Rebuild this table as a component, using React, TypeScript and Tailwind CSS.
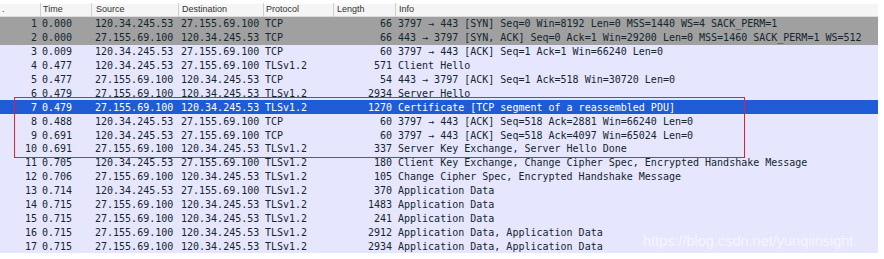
const rows: [string, string, string, string, string, string, string][] = [
  ['1', '0.000', '120.34.245.53', '27.155.69.100', 'TCP', '66', '3797 → 443 [SYN] Seq=0 Win=8192 Len=0 MSS=1440 WS=4 SACK_PERM=1'],
  ['2', '0.000', '27.155.69.100', '120.34.245.53', 'TCP', '66', '443 → 3797 [SYN, ACK] Seq=0 Ack=1 Win=29200 Len=0 MSS=1460 SACK_PERM=1 WS=512'],
  ['3', '0.009', '120.34.245.53', '27.155.69.100', 'TCP', '60', '3797 → 443 [ACK] Seq=1 Ack=1 Win=66240 Len=0'],
  ['4', '0.477', '120.34.245.53', '27.155.69.100', 'TLSv1.2', '571', 'Client Hello'],
  ['5', '0.477', '27.155.69.100', '120.34.245.53', 'TCP', '54', '443 → 3797 [ACK] Seq=1 Ack=518 Win=30720 Len=0'],
  ['6', '0.479', '27.155.69.100', '120.34.245.53', 'TLSv1.2', '2934', 'Server Hello'],
  ['7', '0.479', '27.155.69.100', '120.34.245.53', 'TLSv1.2', '1270', 'Certificate [TCP segment of a reassembled PDU]'],
  ['8', '0.488', '120.34.245.53', '27.155.69.100', 'TCP', '60', '3797 → 443 [ACK] Seq=518 Ack=2881 Win=66240 Len=0'],
  ['9', '0.691', '120.34.245.53', '27.155.69.100', 'TCP', '60', '3797 → 443 [ACK] Seq=518 Ack=4097 Win=65024 Len=0'],
  ['10', '0.691', '27.155.69.100', '120.34.245.53', 'TLSv1.2', '337', 'Server Key Exchange, Server Hello Done'],
  ['11', '0.705', '120.34.245.53', '27.155.69.100', 'TLSv1.2', '180', 'Client Key Exchange, Change Cipher Spec, Encrypted Handshake Message'],
  ['12', '0.706', '27.155.69.100', '120.34.245.53', 'TLSv1.2', '105', 'Change Cipher Spec, Encrypted Handshake Message'],
  ['13', '0.714', '120.34.245.53', '27.155.69.100', 'TLSv1.2', '370', 'Application Data'],
  ['14', '0.715', '27.155.69.100', '120.34.245.53', 'TLSv1.2', '1483', 'Application Data'],
  ['15', '0.715', '27.155.69.100', '120.34.245.53', 'TLSv1.2', '241', 'Application Data'],
  ['16', '0.715', '27.155.69.100', '120.34.245.53', 'TLSv1.2', '2912', 'Application Data, Application Data'],
  ['17', '0.715', '27.155.69.100', '120.34.245.53', 'TLSv1.2', '2934', 'Application Data, Application Data'],
];

const rowClass = (no: string) => {
  if (no === '1' || no === '2') return 'bg-[#a0a0a0] text-[#12272e]';
  if (no === '7') return 'bg-[#1f5bd4] text-white';
  return 'bg-[#e7e6ff] text-[#12272e]';
};

export default function App() {
  return (
    <div className="relative w-[884px] h-[259px] bg-white pt-[4px] overflow-hidden">
      <div className="w-[878px]">
        {/* Header */}
        <div className="flex h-[13px] items-center bg-[#f5f5f5] text-[9px] text-[#333] font-['Liberation_Sans',sans-serif] border-b border-[#dcdcdc]">
          <div className="w-[40px] pl-[2px] overflow-hidden">.</div>
          <div className="w-[51px] pl-[2px] border-l border-[#cfcfcf]">Time</div>
          <div className="w-[87px] pl-[4px] border-l border-[#cfcfcf]">Source</div>
          <div className="w-[85px] pl-[3px] border-l border-[#cfcfcf]">Destination</div>
          <div className="w-[70px] pl-[2px] border-l border-[#cfcfcf]">Protocol</div>
          <div className="w-[62px] pl-[3px] border-l border-[#cfcfcf]">Length</div>
          <div className="flex-1 pl-[3px] border-l border-[#cfcfcf]">Info</div>
        </div>

        {/* Packet rows */}
        <div className="font-['DejaVu_Sans_Mono',monospace] text-[10px]">
          {rows.map((r) => (
            <div key={r[0]} className={`flex h-[13.9px] items-center whitespace-nowrap ${rowClass(r[0])}`}>
              <div className="w-[37px] text-right">{r[0]}</div>
              <div className="w-[5px]" />
              <div className="w-[53px]">{r[1]}</div>
              <div className="w-[86px]">{r[2]}</div>
              <div className="w-[84px]">{r[3]}</div>
              <div className="w-[68px]">{r[4]}</div>
              <div className="w-[59px] text-right">{r[5]}</div>
              <div className="flex-1 pl-[6px] overflow-hidden">{r[6]}</div>
            </div>
          ))}
        </div>
      </div>

      {/* Red annotation box */}
      <div className="absolute left-[14px] top-[97px] w-[731px] h-[61px] border-[1.5px] border-[#ee1c2c]" />

      {/* Watermark */}
      <div className="absolute left-[643px] top-[231px] text-[14.5px] text-white/60 font-['Liberation_Sans',sans-serif]">
        https://blog.csdn.net/yunqiinsight
      </div>
    </div>
  );
}
